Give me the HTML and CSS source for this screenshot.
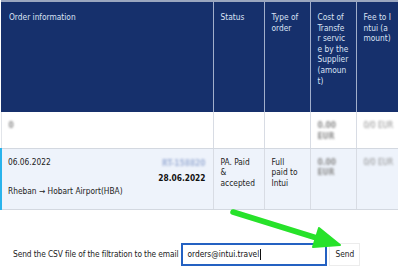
FILE: index.html
```html
<!DOCTYPE html>
<html>
<head>
<meta charset="utf-8">
<link rel="stylesheet" href="styles.css">
</head>
<body>
<div class="page">
  <table class="orders">
    <colgroup>
      <col class="c1"><col class="c2"><col class="c3"><col class="c4"><col class="c5">
    </colgroup>
    <thead>
      <tr class="head">
        <th>Order information</th>
        <th>Status</th>
        <th>Type of<br>order</th>
        <th>Cost of<br>Transfe<br>r servic<br>e by the<br>Supplier<br>(amoun<br>t)</th>
        <th>Fee to I<br>ntui (a<br>mount)</th>
      </tr>
    </thead>
    <tbody>
      <tr class="row row-plain">
        <td><span class="blur">0</span></td>
        <td></td>
        <td></td>
        <td><span class="blur">0.00<br>EUR</span></td>
        <td><span class="blur fee">0/0 EUR</span></td>
      </tr>
      <tr class="row row-active">
        <td>
          <div class="info">
            <div class="info-left">
              <span>06.06.2022</span>
              <span>Rheban → Hobart Airport(HBA)</span>
            </div>
            <div class="info-right">
              <span class="blur blue">RT-158820</span>
              <span class="bold">28.06.2022</span>
            </div>
          </div>
        </td>
        <td>PA. Paid<br>&amp;<br>accepted</td>
        <td>Full<br>paid to<br>Intui</td>
        <td><span class="blur">0.00<br>EUR</span></td>
        <td><span class="blur fee">0/0 EUR</span></td>
      </tr>
    </tbody>
  </table>

  <div class="send-row">
    <span class="send-label">Send the CSV file of the filtration to the email</span>
    <div class="email-box">orders@intui.travel<span class="caret"></span></div>
    <div class="send-btn">Send</div>
  </div>

  <svg class="arrow" width="398" height="270" viewBox="0 0 398 270">
    <line x1="233" y1="212" x2="320" y2="239" stroke="#27e22a" stroke-width="5.5" stroke-linecap="round"/>
    <polygon points="340,245 319,228 313,247" fill="#27e22a" stroke="#27e22a" stroke-width="2" stroke-linejoin="round"/>
  </svg>
</div>
</body>
</html>
```

FILE: styles.css
```css
html, body {
  margin: 0;
  padding: 0;
  background: #ffffff;
}

.page {
  position: relative;
  width: 398px;
  height: 270px;
  overflow: hidden;
  font-family: "DejaVu Sans Condensed", "DejaVu Sans", sans-serif;
  font-size: 8.3px;
  line-height: 10.6px;
  color: #222;
}

.orders {
  border-collapse: collapse;
  table-layout: fixed;
  width: 420px;
}

.c1 { width: 212px; }
.c2 { width: 51px; }
.c3 { width: 46px; }
.c4 { width: 46px; }
.c5 { width: 65px; }

.head th {
  background: #16306c;
  color: #dbe3f4;
  font-weight: normal;
  text-align: left;
  vertical-align: top;
  height: 111px;
  padding: 10px 4px 0 7px;
  box-sizing: border-box;
  border-top: 2px solid #9aa6bf;
  border-left: 1px solid #a1aecb;
}

.head th:first-child {
  border-left: none;
  padding-left: 8px;
}

.row td {
  vertical-align: top;
  padding: 8px 4px 0 7px;
  box-sizing: border-box;
  border-left: 1px solid #d8dce4;
  border-bottom: 1px solid #d3d8e0;
}

.row-plain td { height: 36px; background: #ffffff; }
.row-plain td:first-child { border-left: 1px solid #e2e5ea; }

.row-active td { height: 61px; background: #eef3fb; }
.row-active td:first-child { border-left: 2px solid #29b3ec; padding-left: 6px; }

.info {
  display: flex;
  justify-content: space-between;
  padding-right: 3px;
}

.info-left {
  display: flex;
  flex-direction: column;
  gap: 19px;
}

.info-right {
  display: flex;
  flex-direction: column;
  align-items: flex-end;
  gap: 5px;
  padding-top: 1px;
}

.bold { font-weight: bold; color: #111; }

.blur {
  display: inline-block;
  color: #8e8e8e;
  font-weight: bold;
  filter: blur(1.3px);
}

.blur.blue { color: #a3b4d8; }

.blur.fee {
  font-weight: normal;
  white-space: nowrap;
}

.send-row {
  display: flex;
  align-items: center;
  padding: 33px 0 0 13px;
}

.send-label {
  margin-right: 3px;
  letter-spacing: -0.1px;
  color: #222;
}

.email-box {
  width: 146px;
  height: 23px;
  box-sizing: border-box;
  border: 2px solid #2461c2;
  padding: 0 4px;
  display: flex;
  align-items: center;
  background: #fff;
  color: #111;
}

.caret {
  display: inline-block;
  width: 1px;
  height: 11px;
  background: #111;
  margin-left: 1px;
}

.send-btn {
  margin-left: 2px;
  width: 31px;
  height: 23px;
  box-sizing: border-box;
  border: 1px solid #ececec;
  background: #fff;
  display: flex;
  align-items: center;
  justify-content: center;
  color: #222;
}

.arrow {
  position: absolute;
  left: 0;
  top: 0;
  pointer-events: none;
}
```
